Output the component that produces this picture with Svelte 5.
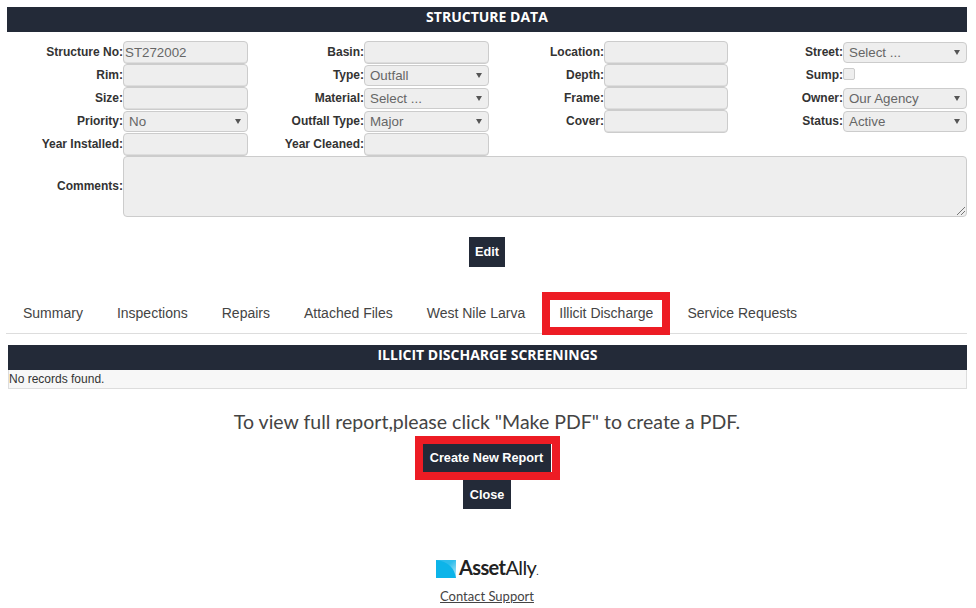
<script>
    const rows = [
        [
            { label: 'Structure No', value: 'ST272002' },
            { label: 'Basin' },
            { label: 'Location' },
            { label: 'Street', select: 'Select ...' }
        ],
        [
            { label: 'Rim' },
            { label: 'Type', select: 'Outfall' },
            { label: 'Depth' },
            { label: 'Sump', check: true }
        ],
        [
            { label: 'Size' },
            { label: 'Material', select: 'Select ...' },
            { label: 'Frame' },
            { label: 'Owner', select: 'Our Agency' }
        ],
        [
            { label: 'Priority', select: 'No' },
            { label: 'Outfall Type', select: 'Major' },
            { label: 'Cover' },
            { label: 'Status', select: 'Active' }
        ],
        [
            { label: 'Year Installed' },
            { label: 'Year Cleaned' }
        ]
    ];

    const tabs = ['Summary', 'Inspections', 'Repairs', 'Attached Files', 'West Nile Larva', 'Illicit Discharge', 'Service Requests'];
</script>

<div class="page">
    <div class="head head-top">STRUCTURE DATA</div>

    <div class="form">
        {#each rows as row}
            <div class="row">
                {#each row as f, i}
                    <div class="field f{i}">
                        <span class="lbl">{f.label}:</span>
                        {#if f.select}
                            <div class="ctl sel">{f.select}<span class="arrow"></span></div>
                        {:else if f.check}
                            <div class="chk"></div>
                        {:else}
                            <div class="ctl txt">{f.value ?? ''}</div>
                        {/if}
                    </div>
                {/each}
            </div>
        {/each}
        <div class="row comments">
            <span class="lbl">Comments:</span>
            <div class="area">
                <svg class="grip" width="10" height="10" viewBox="0 0 10 10">
                    <path d="M1 9 9 1M5 9 9 5" stroke="#777" stroke-width="1" fill="none" />
                </svg>
            </div>
        </div>
    </div>

    <div class="edit-wrap"><button class="btn">Edit</button></div>

    <div class="tabs">
        {#each tabs as t}
            <div class="tab" class:marked={t === 'Illicit Discharge'}>{t}</div>
        {/each}
    </div>

    <div class="head head-sub">ILLICIT DISCHARGE SCREENINGS</div>
    <div class="empty">No records found.</div>

    <p class="note">To view full report,please click "Make PDF" to create a PDF.</p>

    <div class="actions">
        <div class="marked-btn"><button class="btn create">Create New Report</button></div>
        <button class="btn close">Close</button>
    </div>

    <div class="foot">
        <div class="logo">
            <svg width="20" height="18" viewBox="0 0 20 18">
                <defs>
                    <linearGradient id="fade" x1="0" y1="0" x2="1" y2="1">
                        <stop offset="0.45" stop-color="#2dbdec" />
                        <stop offset="1" stop-color="#c4ecf9" />
                    </linearGradient>
                </defs>
                <rect width="20" height="18" fill="#0db4e9" />
                <path d="M0 0H20V18C19 9 12 1 0 0Z" fill="url(#fade)" />
            </svg>
            <span class="brand"><b>Asset</b>Ally<i>.</i></span>
        </div>
        <a href="#top" class="support">Contact Support</a>
    </div>
</div>

<style>
    :global(body) {
        margin: 0;
        background: #fff;
    }

    .page {
        width: 976px;
        height: 608px;
        overflow: hidden;
        padding: 7px 9px 0 7px;
        box-sizing: border-box;
        font-family: "Liberation Sans", Arial, sans-serif;
        font-size: 12px;
        color: #333;
    }

    .head {
        background: #232a38;
        color: #fff;
        text-align: center;
        font-family: "Open Sans", sans-serif;
        font-weight: 700;
        font-size: 14px;
        height: 25px;
        line-height: 19px;
    }

    .form {
        margin-top: 9px;
    }

    .row {
        display: flex;
        height: 23px;
    }

    .field {
        display: flex;
        align-items: flex-start;
    }

    .f0 { width: 241px; }
    .f1 { width: 241px; }
    .f2 { width: 239px; }
    .f3 { width: 239px; }

    .lbl {
        font-weight: 700;
        font-size: 12px;
        line-height: 22px;
        text-align: right;
        flex: none;
        white-space: nowrap;
    }

    .f0 .lbl { width: 116px; }
    .f1 .lbl { width: 116px; }
    .f2 .lbl { width: 115px; }
    .f3 .lbl { width: 115px; }

    .ctl {
        box-sizing: border-box;
        width: 125px;
        border: 1px solid #ccc;
        border-radius: 4px;
        background: #eee;
        color: #666;
        font-size: 13.33px;
        white-space: nowrap;
    }

    .f2 .ctl,
    .f3 .ctl {
        width: 124px;
    }

    .txt {
        height: 23px;
        line-height: 21px;
        padding-left: 1px;
        box-shadow: inset 0 -1px 0 #ddd;
    }

    .sel {
        height: 21px;
        margin-top: 1px;
        line-height: 19px;
        padding-left: 5px;
        position: relative;
    }

    .arrow {
        position: absolute;
        right: 6px;
        top: 7px;
        width: 0;
        height: 0;
        border-left: 3px solid transparent;
        border-right: 3px solid transparent;
        border-top: 5px solid #555;
    }

    .chk {
        width: 10px;
        height: 10px;
        margin-top: 4px;
        border: 1px solid #ccc;
        border-radius: 2px;
        background: #eee;
    }

    .comments {
        height: 61px;
        align-items: center;
    }

    .comments .lbl {
        width: 116px;
        margin-bottom: 2px;
    }

    .area {
        position: relative;
        box-sizing: border-box;
        width: 844px;
        height: 61px;
        border: 1px solid #ccc;
        border-radius: 4px;
        background: #eee;
    }

    .grip {
        position: absolute;
        right: 0;
        bottom: 0;
    }

    .edit-wrap {
        text-align: center;
        margin-top: 20px;
        height: 30px;
    }

    .btn {
        border: 0;
        background: #232a38;
        color: #fff;
        font-family: "Liberation Sans", Arial, sans-serif;
        font-weight: 700;
        font-size: 12.7px;
        padding: 0;
        display: inline-block;
    }

    .edit-wrap .btn {
        width: 36px;
        height: 30px;
    }

    .tabs {
        display: flex;
        margin-top: 25px;
        margin-left: -1px;
        height: 41px;
        border-bottom: 1px solid #ddd;
        color: #444;
    }

    .tab {
        flex: none;
        font-size: 14px;
        padding: 0 17px;
        line-height: 43px;
        height: 43px;
        white-space: nowrap;
    }

    .tab.marked {
        position: relative;
        box-sizing: border-box;
        border: 8px solid #ed1c24;
        padding: 0 9px;
        line-height: 27px;
    }

    .head-sub {
        margin-top: 11px;
        margin-left: 1px;
    }

    .empty {
        box-sizing: border-box;
        margin-left: 1px;
        height: 19px;
        background: #f7f7f7;
        border: 1px solid #ddd;
        border-top: 0;
        font-size: 12px;
        line-height: 18px;
    }

    .note {
        margin: 20px 0 0;
        text-align: center;
        font-family: "Lato", sans-serif;
        font-size: 19.5px;
        line-height: 25px;
        color: #444;
    }

    .actions {
        display: flex;
        flex-direction: column;
        align-items: center;
    }

    .marked-btn {
        margin-top: 2px;
        border: 8px solid #ed1c24;
        display: flex;
    }

    .create {
        width: 129px;
        height: 28px;
        border-right: 1px solid #fff;
    }

    .close {
        width: 48px;
        height: 29px;
    }

    .foot {
        margin-top: 46px;
        text-align: center;
    }

    .logo {
        display: flex;
        justify-content: center;
        align-items: center;
        gap: 3px;
    }

    .brand {
        font-family: "Lato", sans-serif;
        font-size: 20px;
        line-height: 24px;
        letter-spacing: -0.6px;
        color: #222;
    }

    .brand b {
        font-weight: 700;
    }

    .brand i {
        font-style: normal;
        font-size: 10px;
    }

    .support {
        display: block;
        margin-top: 5px;
        font-family: "Lato", sans-serif;
        font-size: 13px;
        color: #444;
        line-height: 16px;
    }
</style>
